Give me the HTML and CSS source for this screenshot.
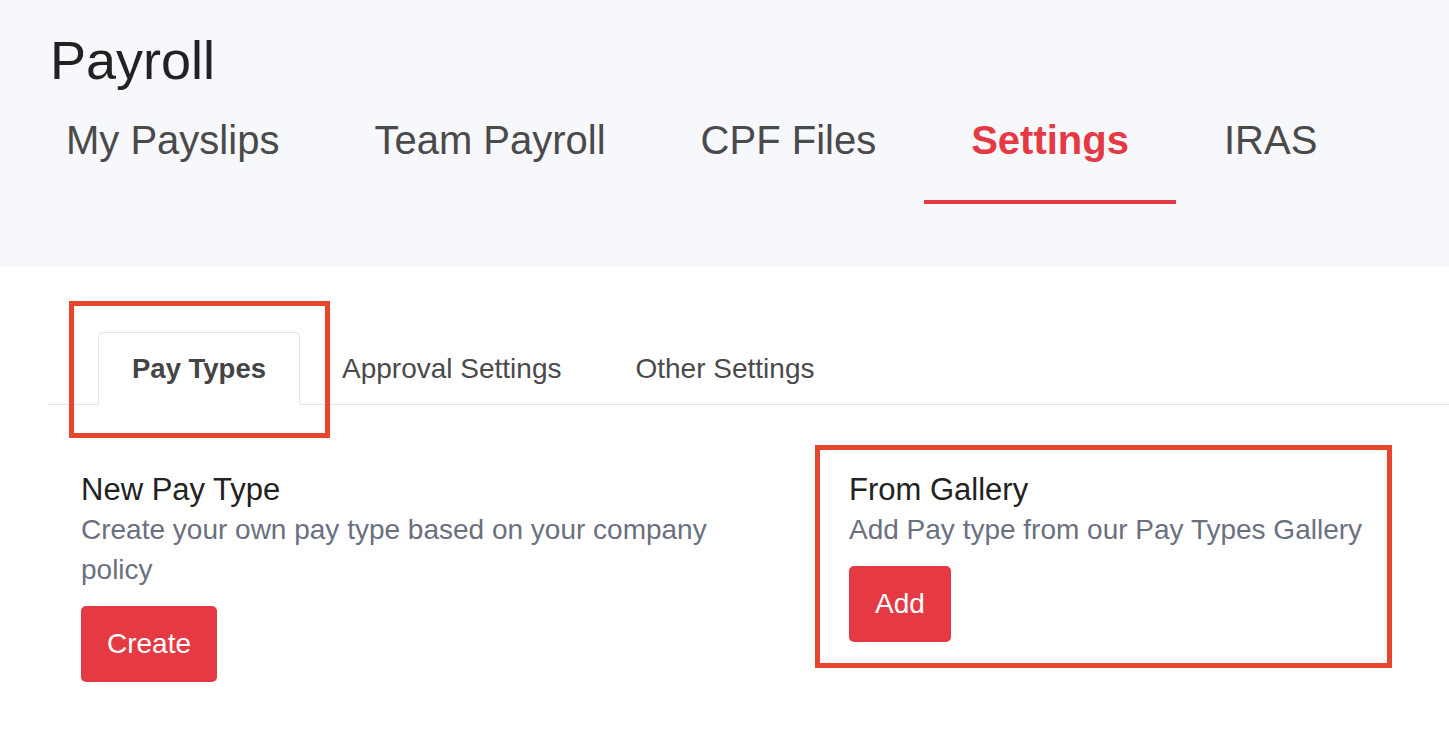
FILE: index.html
```html
<!DOCTYPE html>
<html lang="en">
<head>
<meta charset="utf-8">
<title>Payroll</title>
<link rel="stylesheet" href="styles.css">
</head>
<body>
<header class="header">
  <h1 class="title">Payroll</h1>
  <nav class="nav">
    <a class="nav-item">My Payslips</a>
    <a class="nav-item">Team Payroll</a>
    <a class="nav-item">CPF Files</a>
    <a class="nav-item active">Settings</a>
    <a class="nav-item">IRAS</a>
  </nav>
</header>
<main class="main">
  <div class="subtabs">
    <a class="subtab active">Pay Types</a>
    <a class="subtab">Approval Settings</a>
    <a class="subtab">Other Settings</a>
  </div>
  <div class="cards">
    <section class="card">
      <h2 class="card-title">New Pay Type</h2>
      <p class="card-desc">Create your own pay type based on your company policy</p>
      <button class="btn">Create</button>
    </section>
    <section class="card">
      <h2 class="card-title">From Gallery</h2>
      <p class="card-desc">Add Pay type from our Pay Types Gallery</p>
      <button class="btn">Add</button>
    </section>
  </div>
</main>
<div class="mark mark-tabs"></div>
<div class="mark mark-gallery"></div>
</body>
</html>
```
FILE: styles.css
```css
* { box-sizing: border-box; }
html, body { margin: 0; padding: 0; }
body {
  font-family: "Liberation Sans", Arial, Helvetica, sans-serif;
  background: #ffffff;
  color: #222;
  width: 1449px;
  height: 739px;
  overflow: hidden;
}
.header {
  background: #f7f8fc;
  padding: 30px 0 63px 50px;
}
.title {
  margin: 0 0 30px;
  font-size: 54px;
  line-height: 60px;
  font-weight: 400;
  color: #222;
}
.nav {
  display: flex;
  margin-left: -31.5px;
}
.nav-item {
  padding: 0 47.5px 40px;
  font-size: 40px;
  line-height: 40px;
  color: #4a4a4a;
  border-bottom: 4px solid transparent;
  white-space: nowrap;
}
.nav-item.active {
  color: #e53a43;
  font-weight: 700;
  border-bottom-color: #e53a43;
}
.main {
  margin-left: 48px;
}
.subtabs {
  display: flex;
  gap: 10px;
  padding: 65px 0 0 50px;
  border-bottom: 1px solid #e4e4ea;
}
.subtab {
  height: 73px;
  margin-bottom: -1px;
  display: flex;
  align-items: center;
  padding: 0 31px;
  border: 1px solid transparent;
  border-radius: 5px 5px 0 0;
  font-size: 28px;
  color: #4a4a4a;
  white-space: nowrap;
}
.subtab.active {
  padding: 0 33px;
  font-size: 27.5px;
  font-weight: 700;
  color: #444;
  background: #fff;
  border-color: #e4e4ea #e4e4ea #fff;
}
.cards {
  display: grid;
  grid-template-columns: 680px 1fr;
  column-gap: 88px;
  padding: 65px 0 0 33px;
}
.card-title {
  margin: 0;
  font-size: 31px;
  line-height: 40px;
  font-weight: 400;
  color: #222;
}
.card-desc {
  margin: 0 0 16px;
  font-size: 28px;
  line-height: 40px;
  color: #6b7080;
}
.btn {
  height: 76px;
  padding: 0 26px;
  border: none;
  border-radius: 5px;
  background: #e53a43;
  color: #fff;
  font-family: inherit;
  font-size: 28px;
}
.mark {
  position: absolute;
  border: 5px solid #e8452f;
  pointer-events: none;
}
.mark-tabs {
  left: 69px;
  top: 301px;
  width: 261px;
  height: 137px;
}
.mark-gallery {
  left: 815px;
  top: 445px;
  width: 577px;
  height: 223px;
}
```
